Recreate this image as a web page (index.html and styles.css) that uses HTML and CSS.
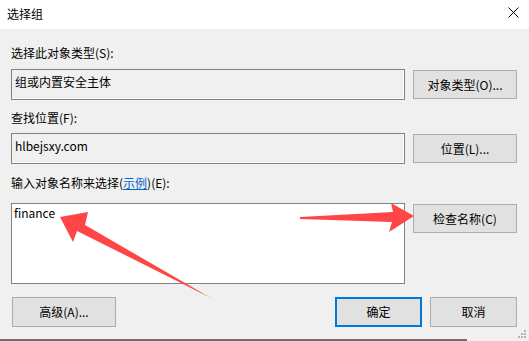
FILE: index.html
```html
<!DOCTYPE html>
<html lang="zh-CN">
<head>
  <meta charset="UTF-8">
  <title>选择组</title>
  <link rel="stylesheet" href="styles.css">
</head>
<body>

  <div class="dialog">
    <div class="title-bar">
      <span class="title">选择组</span>
      <svg class="close" width="11" height="11" viewBox="0 0 11 11">
        <path d="M0.5 0.5 L10.5 10.5 M10.5 0.5 L0.5 10.5" stroke="#000" stroke-width="1" fill="none"/>
      </svg>
    </div>

    <div class="content">
      <div class="label label-types">选择此对象类型(S):</div>
      <div class="row row-types">
        <div class="field">组或内置安全主体</div>
        <button class="btn">对象类型(O)...</button>
      </div>

      <div class="label label-location">查找位置(F):</div>
      <div class="row row-location">
        <div class="field">hlbejsxy.com</div>
        <button class="btn">位置(L)...</button>
      </div>

      <div class="label label-names">输入对象名称来选择(<a href="#">示例</a>)(E):</div>
      <div class="row row-names">
        <div class="field field-edit">finance</div>
        <button class="btn">检查名称(C)</button>
      </div>

      <div class="footer-row">
        <button class="btn btn-advanced">高级(A)...</button>
        <div class="actions">
          <button class="btn btn-small btn-default">确定</button>
          <button class="btn btn-small">取消</button>
        </div>
      </div>
    </div>

    <div class="bottom-edge"></div>

    <svg class="grip" width="10" height="8" viewBox="0 0 10 8">
      <rect x="7" y="0" width="2" height="2" fill="#b4b4b4"/>
      <rect x="4" y="3" width="2" height="2" fill="#b4b4b4"/>
      <rect x="7" y="3" width="2" height="2" fill="#b4b4b4"/>
      <rect x="1" y="6" width="2" height="2" fill="#b4b4b4"/>
      <rect x="4" y="6" width="2" height="2" fill="#b4b4b4"/>
      <rect x="7" y="6" width="2" height="2" fill="#b4b4b4"/>
    </svg>

    <!-- annotation arrows drawn over the dialog -->
    <svg class="arrows" width="529" height="341" viewBox="0 0 529 341">
      <polygon points="60,217 88,212 85,225 211,298 77,231 73,242" fill="#ff4646"/>
      <polygon points="414,216 391,203 393,212 300,217 300,219 392,222 389,232" fill="#ff4646"/>
    </svg>
  </div>

</body>
</html>
```

FILE: styles.css
```css
:root {
  --face: #f0f0f0;
  --btn: #e1e1e1;
  --btn-border: #adadad;
  --field-border: #828282;
  --accent: #0078d7;
  --text: #000;
}

body {
  margin: 0;
  font-family: "Noto Sans CJK SC", sans-serif;
  font-size: 12px;
  color: var(--text);
}

.dialog {
  position: relative;
  width: 529px;
  height: 341px;
  background: var(--face);
  overflow: hidden;
}

.title-bar {
  height: 29px;
  background: #fff;
  display: flex;
  align-items: center;
  justify-content: space-between;
  padding: 0 10px 1px 7px;
  box-sizing: border-box;
}

.title {
  line-height: 16px;
}

.close {
  display: block;
  margin-top: -3px;
}

.content {
  padding: 0 12px 0 11px;
}

.label {
  height: 16px;
  line-height: 16px;
  white-space: nowrap;
}

.label a {
  color: #0066cc;
  text-decoration: underline;
}

.label-types {
  margin-top: 16px;
}

.label-location {
  margin-top: 10px;
}

.label-names {
  margin-top: 11px;
}

.row {
  display: flex;
  gap: 8px;
  align-items: flex-start;
}

.row-types {
  margin-top: 8px;
}

.row-location {
  margin-top: 7px;
}

.row-names {
  margin-top: 12px;
}

.field {
  width: 394px;
  height: 31px;
  box-sizing: border-box;
  border: 1px solid var(--field-border);
  box-shadow: inset -1px -1px 0 #fff;
  padding: 4px 3px;
  line-height: 16px;
}

.field-edit {
  height: 81px;
  background: #fff;
  padding: 1px 2px;
}

.btn {
  font: inherit;
  color: var(--text);
  background: var(--btn);
  border: 1px solid var(--btn-border);
  width: 104px;
  height: 29px;
  margin-top: 1px;
  padding: 0;
  box-sizing: border-box;
  line-height: 16px;
}

.footer-row {
  display: flex;
  justify-content: space-between;
  margin-top: 13px;
}

.footer-row .btn {
  height: 30px;
  margin-top: 0;
}

.btn-advanced {
  margin-left: 1px;
}

.actions {
  display: flex;
  gap: 8px;
}

.btn.btn-small {
  width: 87px;
}

.btn-default {
  border: 2px solid var(--accent);
}

.bottom-edge {
  width: 467px;
  height: 2px;
  margin-top: 12px;
  background: #6e6e6e;
}

.grip {
  position: absolute;
  right: 2px;
  bottom: 3px;
}

.arrows {
  position: absolute;
  left: 0;
  top: 0;
  pointer-events: none;
}
```
